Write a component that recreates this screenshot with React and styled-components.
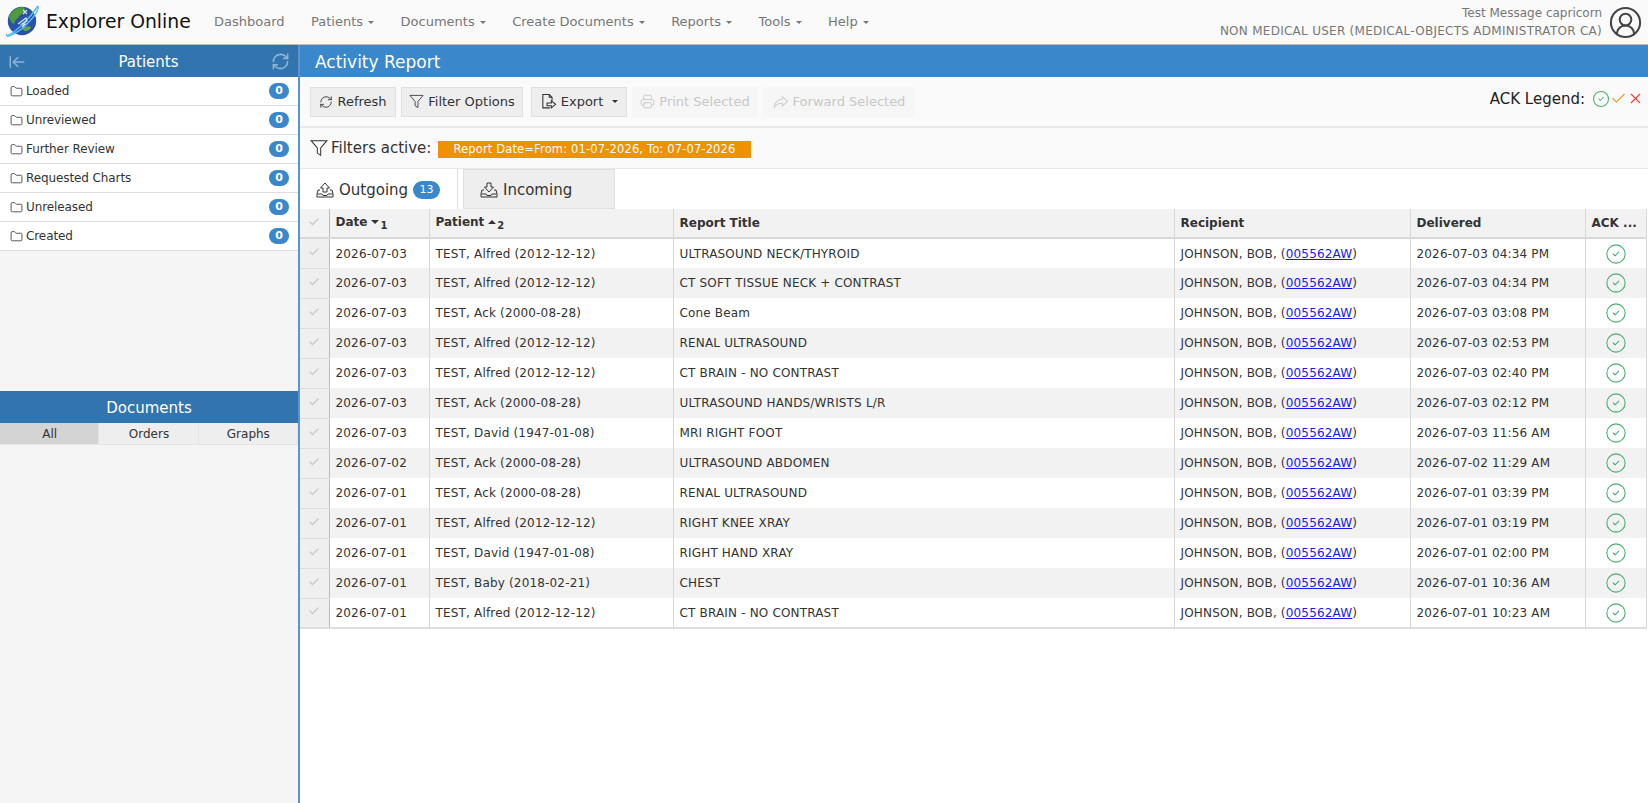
import React from "react"
import styled, { createGlobalStyle } from "styled-components"
import { LuFolder, LuRefreshCw, LuPrinter, LuCheck, LuX, LuCircleCheck, LuCircleUserRound, LuArrowLeftToLine } from "react-icons/lu"

const GlobalStyle = createGlobalStyle`
  html, body { margin: 0; padding: 0; height: 100%; background: #fff; }
  body { font-family: "DejaVu Sans", Verdana, sans-serif; font-size: 12px; color: #333; overflow: hidden; }
  * { box-sizing: border-box; }
`

const Page = styled.div`
  width: 1648px;
  height: 803px;
  display: flex;
  flex-direction: column;
`

const Navbar = styled.header`
  height: 45px;
  flex: none;
  display: flex;
  align-items: center;
  background: #fafafa;
  border-bottom: 1px solid #bdbdbd;
  padding: 0 5px 0 6px;
`
const Brand = styled.div`
  display: flex;
  align-items: center;
  gap: 6px;
  width: 208px;
  font-size: 18.8px;
  color: #111;
  margin-bottom: 2px;
`
const NavItem = styled.a`
  color: #777;
  font-size: 13px;
  margin-right: 26.5px;
  margin-bottom: 2px;
  white-space: nowrap;
`
const Caret = styled.span`
  display: inline-block;
  width: 0;
  height: 0;
  margin-left: 5px;
  vertical-align: middle;
  border-top: 3px solid currentColor;
  border-left: 3px solid transparent;
  border-right: 3px solid transparent;
`
const UserBox = styled.div`
  margin-left: auto;
  display: flex;
  align-items: center;
  gap: 6px;
  color: #777;
`
const UserText = styled.div`
  text-align: right;
  font-size: 12px;
  line-height: 18px;
`
const UserRole = styled.div`
  letter-spacing: 0.27px;
`

const Body = styled.div`
  flex: 1;
  display: flex;
  min-height: 0;
`
const Sidebar = styled.aside`
  width: 300px;
  flex: none;
  display: flex;
  flex-direction: column;
  background: #f5f5f5;
  border-right: 2px solid #5b94cc;
`
const PanelHead = styled.div`
  height: 32px;
  flex: none;
  display: flex;
  align-items: center;
  justify-content: space-between;
  padding: 1px 8px 0;
  background: #3174ae;
  color: #fff;
  font-size: 15px;
  & svg { color: #8fb4d6; }
`
const PanelTitle = styled.span`
  flex: 1;
  text-align: center;
`
const FolderList = styled.div`
  height: 314px;
  flex: none;
`
const FolderRow = styled.div`
  height: 29px;
  display: flex;
  align-items: center;
  gap: 3px;
  padding: 0 9px 0 10px;
  background: #fff;
  border-bottom: 1px solid #ddd;
  color: #333;
  letter-spacing: -0.1px;
`
const Count = styled.span`
  margin-left: ${props => (props.big ? "0" : "auto")};
  min-width: ${props => (props.big ? "27px" : "20px")};
  height: ${props => (props.big ? "18px" : "16px")};
  line-height: ${props => (props.big ? "18px" : "16px")};
  border-radius: 9px;
  background: #3a87cc;
  color: #fff;
  font-size: 11px;
  letter-spacing: 0;
  text-align: center;
  font-weight: ${props => (props.big ? "normal" : "bold")};
`
const DocTabs = styled.div`
  display: grid;
  grid-template-columns: repeat(3, 1fr);
  height: 22px;
  border-bottom: 1px solid #e4e4e4;
`
const DocTab = styled.div`
  display: flex;
  align-items: center;
  justify-content: center;
  padding-left: 1px;
  background: ${props => (props.active ? "#d4d4d4" : "#eeeeee")};
  border-right: 1px solid #e4e4e4;
`

const Main = styled.main`
  flex: 1;
  min-width: 0;
  display: flex;
  flex-direction: column;
`
const MainHead = styled.div`
  height: 32px;
  flex: none;
  display: flex;
  align-items: center;
  padding: 2px 15px 0;
  background: #3a87cc;
  color: #fff;
  font-size: 17px;
`
const Toolbar = styled.div`
  height: 51px;
  flex: none;
  display: flex;
  align-items: center;
  gap: 5px;
  padding: 0 10px;
  background: #fafafa;
  border-bottom: 2px solid #e8e8e8;
`
const ToolButton = styled.button`
  height: 30px;
  width: ${props => props.width}px;
  margin-left: ${props => props.offset || 0}px;
  flex: none;
  display: flex;
  align-items: center;
  justify-content: center;
  gap: 4px;
  padding: 0;
  font: inherit;
  font-size: 13px;
  color: ${props => (props.disabled ? "#c8c8c8" : "#333")};
  background: ${props => (props.disabled ? "#f6f6f6" : "#eeeeee")};
  border: 1px solid ${props => (props.disabled ? "#f6f6f6" : "#e0e0e0")};
`
const Legend = styled.div`
  margin-left: auto;
  margin-top: -6px;
  margin-right: -6px;
  display: flex;
  align-items: center;
  font-size: 15px;
  color: #222;
  & > span { margin-right: 7px; }
`
const FilterBar = styled.div`
  height: 41px;
  flex: none;
  display: flex;
  align-items: center;
  gap: 3px;
  padding: 0 10px;
  background: #fafafa;
  border-bottom: 1px solid #e8e8e8;
  font-size: 15px;
`
const FilterTag = styled.span`
  background: #ee9204;
  color: #fff;
  font-size: 11.5px;
  letter-spacing: 0.15px;
  padding: 0 15px;
  height: 17px;
  line-height: 17px;
  margin-left: 4px;
  margin-top: 2px;
`
const Tabs = styled.div`
  height: 40px;
  flex: none;
  display: flex;
  gap: 5px;
`
const Tab = styled.div`
  width: ${props => props.width}px;
  display: flex;
  align-items: center;
  gap: 5px;
  padding: 2px 16px 0;
  font-size: 15px;
  background: ${props => (props.active ? "#fff" : "#eeeeee")};
  border: 1px solid #e0e0e0;
  border-width: ${props => (props.active ? "0 1px 0 0" : "1px 1px 1px 1px")};
  border-top-color: #ddd;
`
const Grid = styled.table`
  width: 1346px;
  border-collapse: collapse;
  table-layout: fixed;
  border-bottom: 2px solid #ddd;
`
const HeadCell = styled.th`
  height: 29px;
  padding: 0 6px;
  text-align: left;
  font-size: 12px;
  font-weight: bold;
  color: #333;
  background: #f2f2f2;
  border-right: 1px solid #d8d8d8;
  border-bottom: 2px solid #d8d8d8;
  white-space: nowrap;
  overflow: hidden;
`
const Row = styled.tr`
  background: ${props => (props.odd ? "#f2f2f2" : "#fff")};
`
const Cell = styled.td`
  height: 30px;
  padding: 0 6px;
  font-size: 12px;
  letter-spacing: 0.17px;
  color: #333;
  border-right: 1px solid #d8d8d8;
  white-space: nowrap;
  overflow: hidden;
`
const CheckCell = styled.td`
  padding: 0;
  text-align: center;
  background: #efefef;
  border-right: 1px solid #bbb;
  border-bottom: 1px solid #ddd;
  color: #ccc;
`
const CheckHead = styled(HeadCell)`
  padding: 0;
  text-align: center;
  color: #ccc;
  border-right: 1px solid #bbb;
`
const AckCell = styled(Cell)`
  text-align: center;
  padding: 0;
  color: #4cae72;
  & svg { vertical-align: middle; }
`
const SortMark = styled.span`
  display: inline-block;
  width: 0;
  height: 0;
  margin: 0 1px 1px 4px;
  vertical-align: middle;
  border-left: 4px solid transparent;
  border-right: 4px solid transparent;
  border-top: ${props => (props.up ? "0" : "4px solid #333")};
  border-bottom: ${props => (props.up ? "4px solid #333" : "0")};
`
const SortNum = styled.sub`
  font-size: 10px;
`
const Link = styled.a`
  color: #1a1ae6;
  text-decoration: underline;
`

const Logo = () => (
  <svg width="34" height="34" viewBox="0 0 34 34">
    <circle cx="16" cy="17" r="14.2" fill="#2b52a6" />
    <path d="M3 13C5 7 11 3 17 3c2 1 3 3 1 5-2 1-2 3-5 4-1 3-4 3-4 6-1 3-3 2-4-1-1-2-2-3-2-4z" fill="#4f9a3c" />
    <path d="M16 24c3-1 7-2 9-1-1 3-4 4-6 4-2-1-3-2-3-3z" fill="#5cab40" />
    <path d="M1 32c9-4 23-18 31-30" fill="none" stroke="#57bdf0" strokeWidth="1.5" />
    <path d="M32 2c2 5-14 25-29 30-3 0-3-1-2-2" fill="none" stroke="#57bdf0" strokeWidth="1.5" />
    <path d="M12 20l8-6 1 3-5 3 3 0-3 3" fill="none" stroke="#d4e8fa" strokeWidth="1.2" />
    <path d="M17 6l4 4M21 6l-4 4" stroke="#d4e8fa" strokeWidth="1.1" />
  </svg>
)

const TrayIcon = ({ down }) => (
  <svg width="18" height="18" viewBox="0 0 18 18" fill="none" stroke="#333" strokeWidth="1">
    <path d="M4 9H2l-1 4v3h16v-3l-1-4h-2M1.5 13h4.5l1 1.5h4l1-1.5h4.5" />
    {down
      ? <path d="M7 2h4v4h2.5L9 11 4.5 6H7z" />
      : <path d="M7 11h4V7h2.5L9 2 4.5 7H7z" />}
  </svg>
)

const FunnelIcon = ({ size }) => (
  <svg width={size} height={size} viewBox="0 0 16 16" fill="none" stroke="#333" strokeWidth="0.9">
    <path d="M1 1.5h14L9.5 8v6.5L6.5 12.5V8z" />
  </svg>
)

const ExportIcon = () => (
  <svg width="17" height="17" viewBox="0 0 24 24" fill="none" stroke="#333" strokeWidth="1.5">
    <path d="M14 21H4V2h9l4 4v5M13 2v4h4" />
    <path d="M10 14h6v-3l6 5-6 5v-3h-6z" />
  </svg>
)

const ForwardIcon = () => (
  <svg width="16" height="16" viewBox="0 0 24 24" fill="none" stroke="#cfcfcf" strokeWidth="1.6">
    <path d="M14 4l8 7-8 7v-4c-5 0-9 1-12 6 0-7 5-11 12-12z" />
  </svg>
)

const rows = [
  ["2026-07-03", "TEST, Alfred (2012-12-12)", "ULTRASOUND NECK/THYROID", "2026-07-03 04:34 PM"],
  ["2026-07-03", "TEST, Alfred (2012-12-12)", "CT SOFT TISSUE NECK + CONTRAST", "2026-07-03 04:34 PM"],
  ["2026-07-03", "TEST, Ack (2000-08-28)", "Cone Beam", "2026-07-03 03:08 PM"],
  ["2026-07-03", "TEST, Alfred (2012-12-12)", "RENAL ULTRASOUND", "2026-07-03 02:53 PM"],
  ["2026-07-03", "TEST, Alfred (2012-12-12)", "CT BRAIN - NO CONTRAST", "2026-07-03 02:40 PM"],
  ["2026-07-03", "TEST, Ack (2000-08-28)", "ULTRASOUND HANDS/WRISTS L/R", "2026-07-03 02:12 PM"],
  ["2026-07-03", "TEST, David (1947-01-08)", "MRI RIGHT FOOT", "2026-07-03 11:56 AM"],
  ["2026-07-02", "TEST, Ack (2000-08-28)", "ULTRASOUND ABDOMEN", "2026-07-02 11:29 AM"],
  ["2026-07-01", "TEST, Ack (2000-08-28)", "RENAL ULTRASOUND", "2026-07-01 03:39 PM"],
  ["2026-07-01", "TEST, Alfred (2012-12-12)", "RIGHT KNEE XRAY", "2026-07-01 03:19 PM"],
  ["2026-07-01", "TEST, David (1947-01-08)", "RIGHT HAND XRAY", "2026-07-01 02:00 PM"],
  ["2026-07-01", "TEST, Baby (2018-02-21)", "CHEST", "2026-07-01 10:36 AM"],
  ["2026-07-01", "TEST, Alfred (2012-12-12)", "CT BRAIN - NO CONTRAST", "2026-07-01 10:23 AM"],
]

const folders = ["Loaded", "Unreviewed", "Further Review", "Requested Charts", "Unreleased", "Created"]
const menu = ["Patients", "Documents", "Create Documents", "Reports", "Tools", "Help"]

export default function App() {
  return (
    <Page>
      <GlobalStyle />
      <Navbar>
        <Brand><Logo />Explorer Online</Brand>
        <NavItem>Dashboard</NavItem>
        {menu.map(m => <NavItem key={m}>{m}<Caret /></NavItem>)}
        <UserBox>
          <UserText>
            <div>Test Message capricorn</div>
            <UserRole>NON MEDICAL USER (MEDICAL-OBJECTS ADMINISTRATOR CA)</UserRole>
          </UserText>
          <LuCircleUserRound size={35} color="#444" strokeWidth={1.4} />
        </UserBox>
      </Navbar>
      <Body>
        <Sidebar>
          <PanelHead>
            <LuArrowLeftToLine size={18} />
            <PanelTitle>Patients</PanelTitle>
            <LuRefreshCw size={19} />
          </PanelHead>
          <FolderList>
            {folders.map(f => (
              <FolderRow key={f}><LuFolder size={13} strokeWidth={1.5} />{f}<Count>0</Count></FolderRow>
            ))}
          </FolderList>
          <PanelHead><PanelTitle>Documents</PanelTitle></PanelHead>
          <DocTabs>
            <DocTab active>All</DocTab>
            <DocTab>Orders</DocTab>
            <DocTab>Graphs</DocTab>
          </DocTabs>
        </Sidebar>
        <Main>
          <MainHead>Activity Report</MainHead>
          <Toolbar>
            <ToolButton width={86}><LuRefreshCw size={14} strokeWidth={1.5} />Refresh</ToolButton>
            <ToolButton width={122}><FunnelIcon size={15} />Filter Options</ToolButton>
            <ToolButton width={96} offset={3}><ExportIcon />Export<Caret /></ToolButton>
            <ToolButton disabled width={126}><LuPrinter size={15} strokeWidth={1.5} />Print Selected</ToolButton>
            <ToolButton disabled width={152}><ForwardIcon />Forward Selected</ToolButton>
            <Legend>
              <span>ACK Legend:</span>
              <LuCircleCheck size={18} strokeWidth={1.4} color="#4cae72" />
              <LuCheck size={17} strokeWidth={1.6} color="#ee9a2a" />
              <LuX size={17} strokeWidth={1.6} color="#ee3b3b" />
            </Legend>
          </Toolbar>
          <FilterBar>
            <FunnelIcon size={18} />
            Filters active:
            <FilterTag>Report Date=From: 01-07-2026, To: 07-07-2026</FilterTag>
          </FilterBar>
          <Tabs>
            <Tab active width={158}><TrayIcon />Outgoing <Count big>13</Count></Tab>
            <Tab width={152}><TrayIcon down />Incoming</Tab>
          </Tabs>
          <Grid>
            <colgroup>
              <col width="29" /><col width="100" /><col width="244" /><col width="501" />
              <col width="236" /><col width="175" /><col width="61" />
            </colgroup>
            <thead>
              <tr>
                <CheckHead><LuCheck size={12} strokeWidth={3} /></CheckHead>
                <HeadCell>Date<SortMark /><SortNum>1</SortNum></HeadCell>
                <HeadCell>Patient<SortMark up /><SortNum>2</SortNum></HeadCell>
                <HeadCell>Report Title</HeadCell>
                <HeadCell>Recipient</HeadCell>
                <HeadCell>Delivered</HeadCell>
                <HeadCell>ACK ...</HeadCell>
              </tr>
            </thead>
            <tbody>
              {rows.map((r, i) => (
                <Row key={i} odd={i % 2 === 1}>
                  <CheckCell><LuCheck size={12} strokeWidth={3} /></CheckCell>
                  <Cell>{r[0]}</Cell>
                  <Cell>{r[1]}</Cell>
                  <Cell>{r[2]}</Cell>
                  <Cell>JOHNSON, BOB, (<Link>005562AW</Link>)</Cell>
                  <Cell>{r[3]}</Cell>
                  <AckCell><LuCircleCheck size={22} strokeWidth={1.2} /></AckCell>
                </Row>
              ))}
            </tbody>
          </Grid>
        </Main>
      </Body>
    </Page>
  )
}
